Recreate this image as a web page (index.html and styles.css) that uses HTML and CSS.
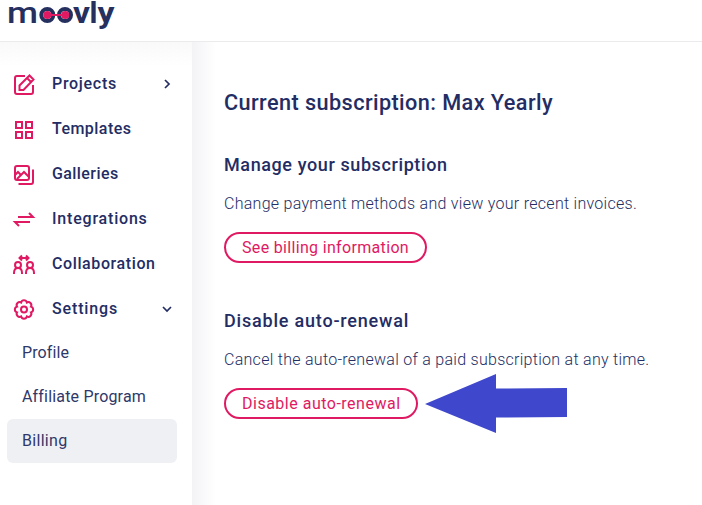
FILE: index.html
```
<!DOCTYPE html>
<html>
	<head>
		<meta charset="UTF-8">
		<title>Moovly - Billing</title>
		<link rel="stylesheet" href="styles.css">
	</head>
	<body>
		<header class="header">
			<svg class="logo" width="110" height="36" viewBox="0 0 110 36">
				<text class="thin" x="-1" y="23" textLength="31" lengthAdjust="spacingAndGlyphs">m</text>
				<circle class="ring" cx="39.300" cy="15" r="6"/>
				<circle class="ring" cx="57" cy="15" r="6"/>
				<path class="link" d="M39 15h18"/>
				<circle class="dot" cx="39.300" cy="15" r="4"/>
				<circle class="dot" cx="57.200" cy="15" r="4"/>
				<text x="65" y="23" textLength="17" lengthAdjust="spacingAndGlyphs">v</text>
				<text x="81.500" y="23">l</text>
				<text x="89.500" y="23" textLength="17" lengthAdjust="spacingAndGlyphs">y</text>
			</svg>
		</header>
		<div class="page">
			<nav class="sidebar">
				<ul class="menu">
					<li>
						<svg class="icon" viewBox="0 0 24 24"><path d="M13 4H5q-2 0-2 2v14q0 2 2 2h14q2 0 2-2v-7M7.500 18v-4.500L17.500 3.500l4 4L11.500 18zM15 6l4 4"/></svg>
						<span class="projects">Projects</span>
						<svg class="chevron" viewBox="0 0 12 12"><path d="M4 2l4 4-4 4"/></svg>
					</li>
					<li>
						<svg class="icon" viewBox="0 0 24 24"><path d="M4 5h6v6H4zM14 5h6v6h-6zM4 15h6v6H4zM14 15h6v6h-6z"/></svg>
						<span class="templates">Templates</span>
					</li>
					<li>
						<svg class="icon" viewBox="0 0 24 24"><rect x="3" y="4" width="14" height="14" rx="2"/><path d="M21 7.500V20q0 2-2 2H6.500M3 13l3-3 3 3M5 17l7-7 5 5"/></svg>
						<span class="galleries">Galleries</span>
					</li>
					<li>
						<svg class="icon" viewBox="0 0 24 24"><path d="M6 10h15l-4-4M18 15H3l4 4"/></svg>
						<span class="integrations">Integrations</span>
					</li>
					<li>
						<svg class="icon" viewBox="0 0 24 24"><circle cx="6" cy="13" r="3"/><circle cx="18" cy="13" r="3"/><path d="M2 22v-1q0-5 4-5t4 5v1M14 22v-1q0-5 4-5t4 5v1M8 6h8M10 3.500L7.500 6 10 8.500M14 3.500L16.500 6 14 8.500"/></svg>
						<span class="collaboration">Collaboration</span>
					</li>
					<li>
						<svg class="icon" viewBox="0 0 24 24"><circle cx="12" cy="12.500" r="3"/><path d="M9.130 5.570A2.970 2.970 0 0 1 14.870 5.570A2.970 2.970 0 0 1 18.930 9.630A2.970 2.970 0 0 1 18.930 15.370A2.970 2.970 0 0 1 14.870 19.430A2.970 2.970 0 0 1 9.130 19.430A2.970 2.970 0 0 1 5.070 15.370A2.970 2.970 0 0 1 5.070 9.630A2.970 2.970 0 0 1 9.130 5.570z"/></svg>
						<span class="settings">Settings</span>
						<svg class="chevron" viewBox="0 0 12 12"><path d="M2 4l4 4 4-4"/></svg>
					</li>
				</ul>
				<ul class="submenu">
					<li><span class="profile">Profile</span></li>
					<li><span class="affiliate">Affiliate Program</span></li>
					<li class="active"><span class="billing">Billing</span></li>
				</ul>
			</nav>
			<main class="content">
				<h1>Current subscription: Max Yearly</h1>
				<section class="block">
					<h2 class="manage">Manage your subscription</h2>
					<p>Change payment methods and view your recent invoices.</p>
					<button class="btn btn-info">See billing information</button>
				</section>
				<section class="block">
					<h2 class="disable">Disable auto-renewal</h2>
					<p>Cancel the auto-renewal of a paid subscription at any time.</p>
					<div class="row">
						<button class="btn btn-disable">Disable auto-renewal</button>
						<svg class="arrow" width="142" height="60" viewBox="0 0 142 60"><path d="M0 30L71 0v14.500L142 14v29l-71 .5V59z"/></svg>
					</div>
				</section>
			</main>
		</div>
	</body>
</html>
```
FILE: styles.css
```
body, h1, h2, p{margin:0;}
ul{margin:0; padding:0; list-style:none;}
*{box-sizing:border-box;}
body{
	height: 505px;
	overflow: hidden;
	background: white;
	color: #232d64;
	font-family: Roboto, "Open Sans", sans-serif;
}
.header{
	height: 42px;
	padding-left: 8px;
	border-bottom: 1px solid #ebebed;
}
.logo{
	display: block;
	overflow: visible;
	fill: #25305f;
	font-size: 30px;
	font-weight: 700;
}
.thin{
	font-weight: 500;
}
.ring{
	fill: none;
	stroke: #25305f;
	stroke-width: 4;
}
.dot{
	fill: #e01a62;
}
.link{
	stroke: #e01a62;
	stroke-width: 2;
}
.page{
	display: flex;
	height: 463px;
}
.sidebar{
	width: 192px;
	padding-top: 19px;
	background: linear-gradient(#f9f9fa, white 24px);
}
.menu li{
	display: flex;
	align-items: center;
	height: 45px;
	padding: 0 19px 0 12px;
	font-size: 16px;
	font-weight: 500;
}
.icon{
	width: 24px;
	height: 24px;
	margin-right: 16px;
	fill: none;
	stroke: #e01a62;
	stroke-width: 2;
}
.chevron{
	width: 12px;
	height: 12px;
	margin-left: auto;
	fill: none;
	stroke: #232d64;
	stroke-width: 1.7;
}
.projects{letter-spacing: .7px;}
.templates{letter-spacing: .45px;}
.galleries{letter-spacing: .42px;}
.integrations{letter-spacing: .8px;}
.collaboration{letter-spacing: .6px;}
.settings{letter-spacing: .85px;}
.profile{letter-spacing: .1px;}
.affiliate{letter-spacing: .18px;}
.billing{letter-spacing: .3px;}
.submenu li{
	display: flex;
	align-items: center;
	width: 170px;
	height: 44px;
	margin-left: 7px;
	padding: 0 0 2px 15px;
	font-size: 16px;
	color: #2f3869;
	border-radius: 6px;
}
.submenu .active{
	background: #eff0f4;
}
.content{
	flex: 1;
	padding: 47px 0 0 32px;
	background: linear-gradient(to right, #f3f3f6, white 24px);
}
h1{
	height: 28px;
	margin-bottom: 36px;
	font-size: 21.7px;
	line-height: 28px;
	font-weight: 500;
	letter-spacing: .41px;
	white-space: nowrap;
}
.block{
	height: 156px;
}
h2{
	font-size: 18px;
	line-height: 24px;
	font-weight: 500;
}
.manage{letter-spacing: .6px;}
.disable{letter-spacing: .8px;}
p{
	margin: 15px 0 16px;
	font-size: 16px;
	line-height: 24px;
	font-weight: 300;
	letter-spacing: .28px;
	white-space: nowrap;
}
.row{
	display: flex;
}
.btn{
	display: block;
	height: 31px;
	padding: 0 16px;
	border: 2px solid #e01a62;
	border-radius: 16px;
	background: white;
	color: #e01a62;
	font: 16px Roboto, sans-serif;
	text-align: left;
	white-space: nowrap;
}
.btn-info{
	width: 203px;
	letter-spacing: .33px;
}
.btn-disable{
	width: 194px;
	letter-spacing: .5px;
}
.arrow{
	margin: -14px 0 0 7px;
	fill: #3f48cc;
}
```
